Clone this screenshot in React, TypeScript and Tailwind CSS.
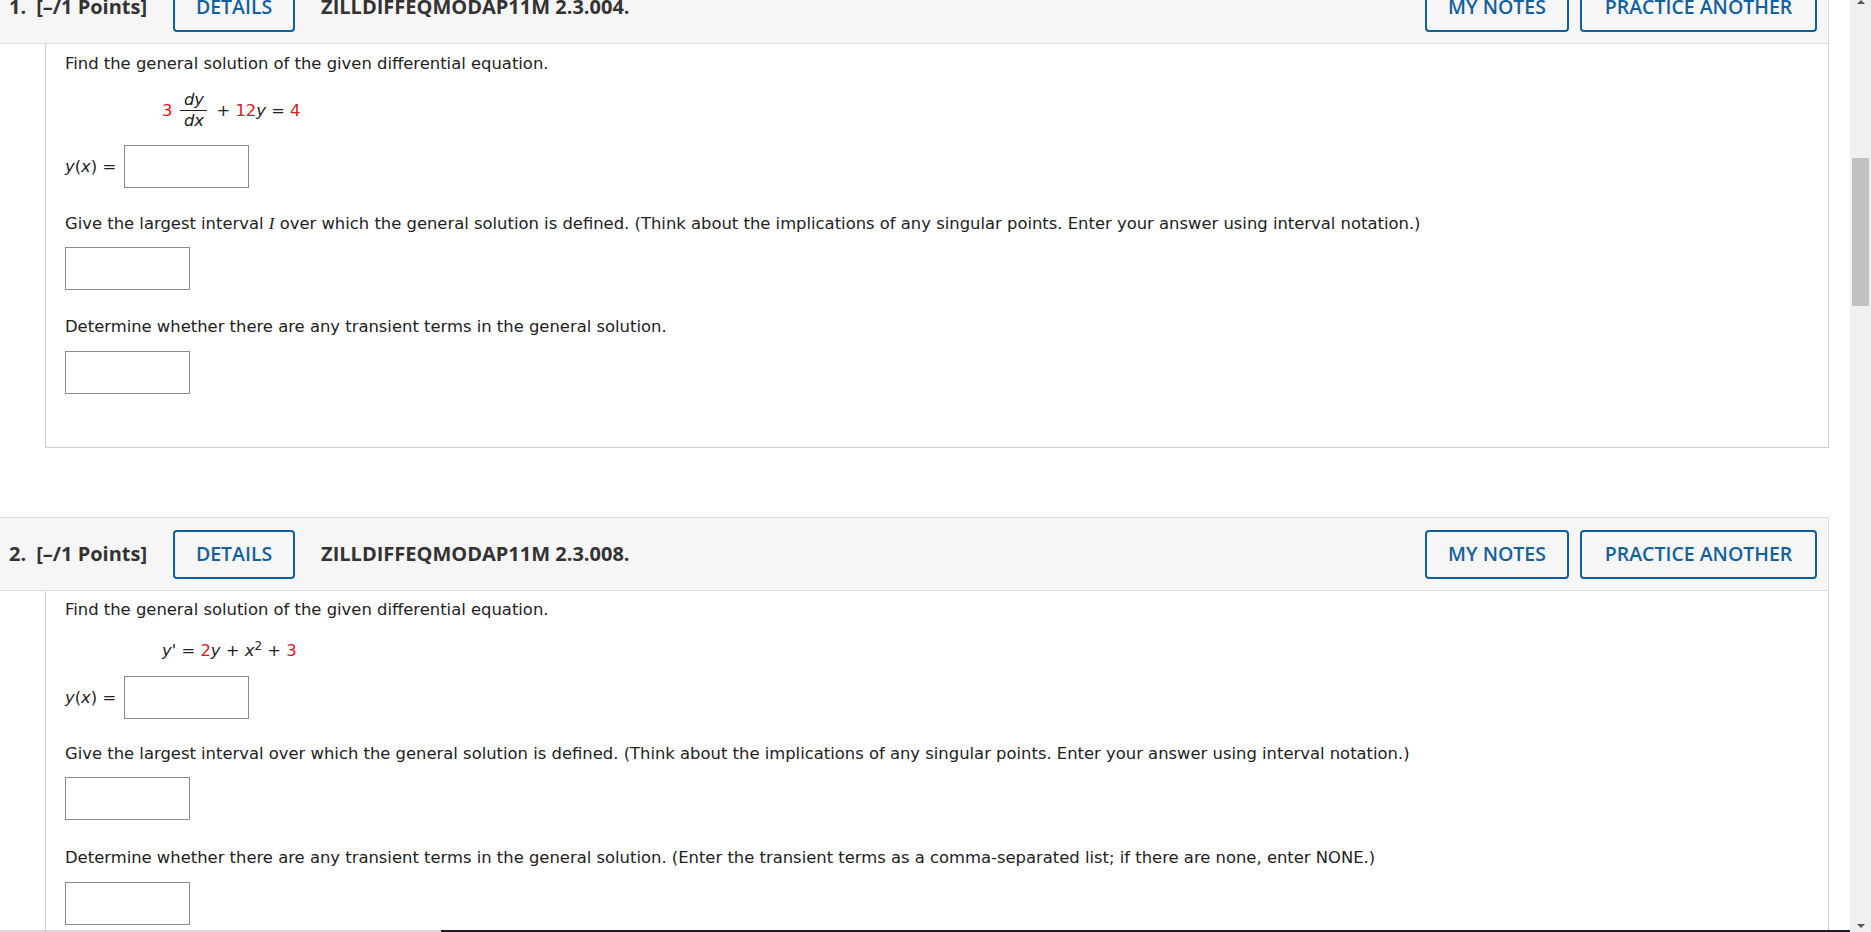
import React from 'react'

const body = "font-['DejaVu_Sans',sans-serif] text-[16.4px] leading-[20px] text-[#222]"
const head = "font-['Open_Sans',sans-serif]"

function AnswerBox() {
  return <div className="w-[125px] h-[43px] border border-[#8c8c8c] bg-white" />
}

function Btn({ label, w }: { label: string; w: string }) {
  return (
    <button className={`${w} h-[49px] border-2 border-[#0f5f9f] rounded-[4px] text-[#13609e] text-[19.5px] font-semibold ${head} flex items-center justify-center`}>
      {label}
    </button>
  )
}

function Header({ num, code }: { num: string; code: string }) {
  return (
    <div className="flex items-center h-[74px] bg-[#f6f6f6] border-y border-r border-[#dcdcdc] pl-[9px] pr-[11px]">
      <span className={`${head} font-bold text-[20px] text-[#333]`}>{num}</span>
      <span className={`${head} font-bold text-[20px] text-[#333] ml-[10px]`}>[–/1 Points]</span>
      <div className="ml-[26px]">
        <Btn label="DETAILS" w="w-[122px]" />
      </div>
      <span className={`${head} font-bold text-[20px] text-[#333] ml-[26px]`}>{code}</span>
      <div className="ml-auto flex gap-[11px]">
        <Btn label="MY NOTES" w="w-[144px]" />
        <Btn label="PRACTICE ANOTHER" w="w-[237px]" />
      </div>
    </div>
  )
}

function Red({ children }: { children: React.ReactNode }) {
  return <span className="text-[#e3161b]">{children}</span>
}

function YofX() {
  return (
    <div className="flex items-center">
      <span><i>y</i>(<i>x</i>) =</span>
      <div className="ml-[8px]">
        <AnswerBox />
      </div>
    </div>
  )
}

export default function App() {
  return (
    <div className="flex h-screen overflow-hidden bg-white relative">
      <main className="flex-1 pr-[21px]">
        <div className="mt-[-30px]">
          {/* question 1 */}
          <section>
            <Header num="1." code="ZILLDIFFEQMODAP11M 2.3.004." />
            <div className={`ml-[45px] border-x border-b border-[#cfcfcf] pl-[19px] pt-[10px] pb-[53px] ${body}`}>
              <p>Find the general solution of the given differential equation.</p>
              <div className="mt-[17px] ml-[97px] flex items-center">
                <Red>3</Red>
                <span className="inline-flex flex-col items-center ml-[8px] leading-[18px]">
                  <i className="px-[2px]">dy</i>
                  <span className="w-[27px] border-t border-[#222] my-[1px]" />
                  <i className="px-[2px]">dx</i>
                </span>
                <span className="ml-[9px]">+ <Red>12</Red><i>y</i> = <Red>4</Red></span>
              </div>
              <div className="mt-[15px]">
                <YofX />
              </div>
              <p className="mt-[26px]">
                Give the largest interval <i className="font-['Liberation_Serif',serif] text-[17px]">I</i> over which the general solution is defined. (Think about the implications of any singular points. Enter your answer using interval notation.)
              </p>
              <div className="mt-[13px]"><AnswerBox /></div>
              <p className="mt-[27px]">Determine whether there are any transient terms in the general solution.</p>
              <div className="mt-[14px]"><AnswerBox /></div>
            </div>
          </section>

          {/* question 2 */}
          <section className="mt-[69px]">
            <Header num="2." code="ZILLDIFFEQMODAP11M 2.3.008." />
            <div className={`ml-[45px] border-x border-b border-[#cfcfcf] pl-[19px] pt-[9px] pb-[52px] ${body}`}>
              <p>Find the general solution of the given differential equation.</p>
              <p className="mt-[21px] ml-[97px]">
                <i>y</i>' = <Red>2</Red><i>y</i> + <i>x</i><sup className="text-[12px]">2</sup> + <Red>3</Red>
              </p>
              <div className="mt-[15px]">
                <YofX />
              </div>
              <p className="mt-[25px]">
                Give the largest interval over which the general solution is defined. (Think about the implications of any singular points. Enter your answer using interval notation.)
              </p>
              <div className="mt-[13px]"><AnswerBox /></div>
              <p className="mt-[28px]">
                Determine whether there are any transient terms in the general solution. (Enter the transient terms as a comma-separated list; if there are none, enter NONE.)
              </p>
              <div className="mt-[14px]"><AnswerBox /></div>
            </div>
          </section>
        </div>
      </main>

      {/* scrollbar */}
      <aside className="w-[21px] bg-[#f0f0f0] flex flex-col items-center">
        <div className="h-[8px] flex items-start justify-center">
          <div className="w-0 h-0 border-x-[4px] border-x-transparent border-b-[4px] border-b-[#555]" />
        </div>
        <div className="mt-[150px] w-[17px] h-[148px] bg-[#c1c1c1]" />
        <div className="mt-auto mb-[4px] w-0 h-0 border-x-[4px] border-x-transparent border-t-[4px] border-t-[#555]" />
      </aside>

      {/* bottom strip */}
      <div className="absolute bottom-0 left-0 right-[21px] h-[2px] flex">
        <div className="w-[441px] bg-[#d6d6d6]" />
        <div className="flex-1 bg-[#1a1d33]" />
      </div>
    </div>
  )
}
